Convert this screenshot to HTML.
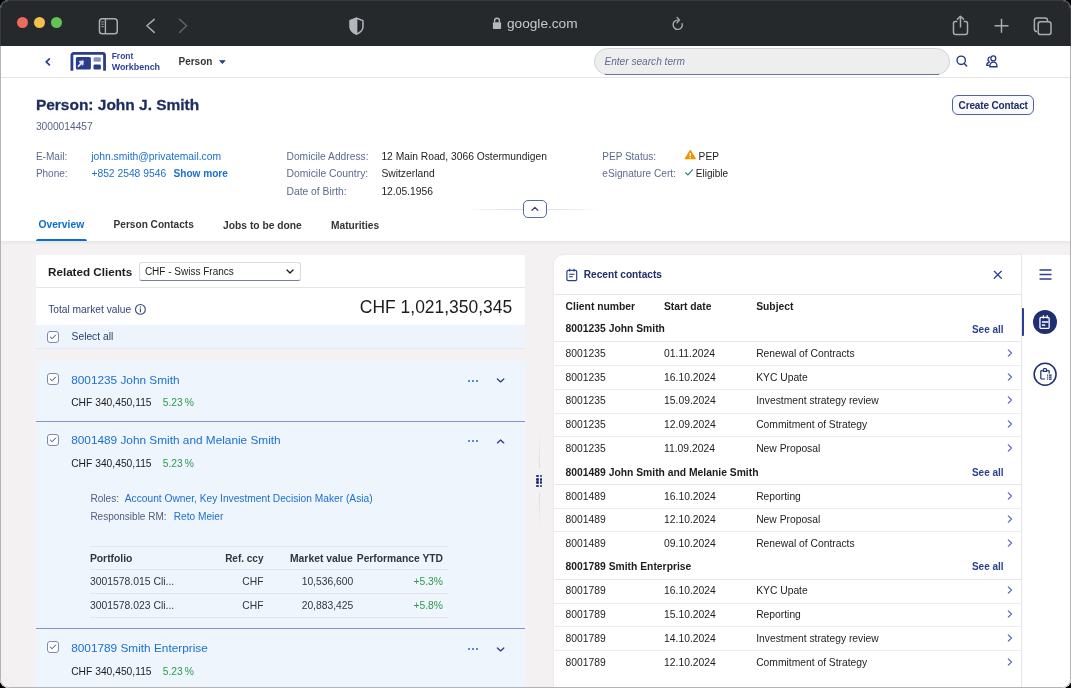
<!DOCTYPE html>
<html><head><meta charset="utf-8"><style>
html,body{margin:0;padding:0;width:1071px;height:688px;overflow:hidden;background:#000}
#win{position:absolute;left:0;top:0;width:1071px;height:688px;border-radius:8.5px;overflow:hidden;background:#fff;will-change:transform}
.t{position:absolute;white-space:nowrap;font-family:"Liberation Sans", sans-serif}
.r{position:absolute;display:block}
#frame{position:absolute;left:0;top:0;width:1071px;height:688px;box-sizing:border-box;border:1px solid #b3b3b3;border-radius:8.5px;pointer-events:none}
#frame2{position:absolute;left:0;top:0;width:1071px;height:46px;box-sizing:border-box;border:1px solid #373a3f;border-bottom:none;border-radius:8.5px 8.5px 0 0;pointer-events:none}
</style></head><body><div id="win">
<div class="r" style="left:0px;top:0px;width:1071px;height:46px;background:#25292c"></div>
<div class="r" style="left:17.2px;top:17.4px;width:11px;height:11px;background:#ec6a5e;border-radius:50%"></div>
<div class="r" style="left:33.9px;top:17.4px;width:11px;height:11px;background:#f4bf4f;border-radius:50%"></div>
<div class="r" style="left:50.6px;top:17.4px;width:11px;height:11px;background:#61c454;border-radius:50%"></div>
<svg class="r" style="left:97px;top:17px;" width="23" height="18" viewBox="0 0 23 18"><rect x="2.45" y="1.85" width="17.8" height="14.85" rx="2.8" fill="none" stroke="#a9acb1" stroke-width="1.5"/><line x1="8.4" y1="1.85" x2="8.4" y2="16.7" stroke="#a9acb1" stroke-width="1.4"/><line x1="4.3" y1="4.9" x2="6.8" y2="4.9" stroke="#a9acb1" stroke-width="0.9"/><line x1="4.3" y1="7.2" x2="6.8" y2="7.2" stroke="#a9acb1" stroke-width="0.9"/><line x1="4.3" y1="9.7" x2="6.8" y2="9.7" stroke="#a9acb1" stroke-width="0.9"/></svg>
<svg class="r" style="left:144px;top:17px;" width="13" height="18" viewBox="0 0 13 18"><polyline points="10.2,2.4 2.9,8.8 10.2,15.4" fill="none" stroke="#a9acb1" stroke-width="1.5" stroke-linecap="round" stroke-linejoin="round"/></svg>
<svg class="r" style="left:177px;top:17px;" width="13" height="18" viewBox="0 0 13 18"><polyline points="2.6,2.4 9.6,8.8 2.6,15.4" fill="none" stroke="#5d6166" stroke-width="1.5" stroke-linecap="round" stroke-linejoin="round"/></svg>
<svg class="r" style="left:348px;top:16px;" width="17" height="20" viewBox="0 0 17 20"><path d="M8.6 2.25 L14.95 4.6 V11 C14.95 14.2 12.2 16.6 8.6 18.1 C5 16.6 2.25 14.2 2.25 11 V4.6 Z" fill="none" stroke="#b3b7be" stroke-width="1.5" stroke-linejoin="round"/><path d="M8.6 2.25 L2.25 4.6 V11 C2.25 14.2 5 16.6 8.6 18.1 Z" fill="#b3b7be" stroke="#b3b7be" stroke-width="1.5" stroke-linejoin="round"/></svg>
<svg class="r" style="left:492px;top:16px;" width="10" height="14" viewBox="0 0 10 14"><path d="M2.6 6.5 V4.6 A2.4 2.4 0 0 1 7.4 4.6 V6.5" fill="none" stroke="#b3b7be" stroke-width="1.4"/><rect x="0.9" y="6.3" width="8.2" height="6.6" rx="1" fill="#b3b7be"/></svg>
<div class="t" style="left:507.00px;top:17px;font-size:13.65px;line-height:13.65px;font-weight:400;color:#c6c8cc;">google.com</div>
<svg class="r" style="left:670px;top:15px;" width="16" height="17" viewBox="0 0 16 17"><path d="M12.14 8.6 A4.6 4.6 0 1 1 7.9 5.2" fill="none" stroke="#a9acb1" stroke-width="1.35" stroke-linecap="round"/><polyline points="7,2.4 9.5,5.05 7,7.7" fill="none" stroke="#a9acb1" stroke-width="1.35" stroke-linecap="round" stroke-linejoin="round"/></svg>
<svg class="r" style="left:951px;top:14px;" width="19" height="22" viewBox="0 0 19 22"><path d="M6.3 7.6 H4.3 A1.8 1.8 0 0 0 2.5 9.4 V18.6 A1.8 1.8 0 0 0 4.3 20.4 H14.7 A1.8 1.8 0 0 0 16.5 18.6 V9.4 A1.8 1.8 0 0 0 14.7 7.6 H12.7" fill="none" stroke="#a9acb1" stroke-width="1.5"/><line x1="9.5" y1="2.5" x2="9.5" y2="13.5" stroke="#a9acb1" stroke-width="1.5"/><polyline points="6.4,5.3 9.5,2.2 12.6,5.3" fill="none" stroke="#a9acb1" stroke-width="1.5" stroke-linejoin="round" stroke-linecap="round"/></svg>
<svg class="r" style="left:993px;top:17px;" width="17" height="17" viewBox="0 0 17 17"><line x1="8.5" y1="1.8" x2="8.5" y2="15.8" stroke="#a9acb1" stroke-width="1.5"/><line x1="1.6" y1="8.8" x2="15.5" y2="8.8" stroke="#a9acb1" stroke-width="1.5"/></svg>
<svg class="r" style="left:1032px;top:15px;" width="22" height="22" viewBox="0 0 22 22"><path d="M5 16.5 H4.6 A2.2 2.2 0 0 1 2.4 14.3 V5.2 A2.2 2.2 0 0 1 4.6 3 H13.3 A2.2 2.2 0 0 1 15.5 5.2 V6" fill="none" stroke="#a9acb1" stroke-width="1.5"/><rect x="6.2" y="6.8" width="12.8" height="12.8" rx="2.4" fill="none" stroke="#a9acb1" stroke-width="1.5"/></svg>
<div class="r" style="left:0px;top:46px;width:1071px;height:31px;background:#fff"></div>
<div class="r" style="left:0px;top:76.5px;width:1071px;height:1px;background:#e4e4e6"></div>
<svg class="r" style="left:42px;top:56px;" width="9" height="12" viewBox="0 0 9 12"><polyline points="7.4,2.9 4.2,5.9 7.4,8.9" fill="none" stroke="#2b3f8f" stroke-width="1.7" stroke-linecap="round" stroke-linejoin="round"/></svg>
<svg class="r" style="left:70px;top:51px;" width="37" height="21" viewBox="0 0 37 21"><path d="M1.9 19.8 V4.35 A2 2 0 0 1 3.9 2.35 H32.55 A2 2 0 0 1 34.55 4.35 V19.8" fill="none" stroke="#2a3d8c" stroke-width="2.8"/><rect x="5.9" y="6" width="15" height="12.6" rx="1.5" fill="#2a3d8c"/><rect x="23.5" y="6.2" width="7.4" height="4.6" rx="1.4" fill="#8792c0"/><rect x="23.5" y="13.4" width="7.4" height="5.2" rx="1.4" fill="#2a3d8c"/><path d="M8.5 15.2 L12 11.7" stroke="#e4e4ea" stroke-width="1.9" stroke-linecap="round"/><path d="M9 10.5 L13.3 9.8 L12.9 14.2 Z" fill="#e4e4ea" stroke="#e4e4ea" stroke-width="0.9" stroke-linejoin="round"/></svg>
<div class="t" style="left:111.70px;top:52px;font-size:8.46px;line-height:8.46px;font-weight:700;color:#2c4494;">Front</div>
<div class="t" style="left:111.70px;top:63px;font-size:8.92px;line-height:8.92px;font-weight:700;color:#2c4494;">Workbench</div>
<div class="t" style="left:178.50px;top:57px;font-size:10.0px;line-height:10.0px;font-weight:700;color:#32363a;">Person</div>
<svg class="r" style="left:218px;top:59px;" width="9" height="6" viewBox="0 0 9 6"><path d="M1.6 1.6 H7.2 L4.4 4.7 Z" fill="#2b3f8f" stroke="#2b3f8f" stroke-width="0.7" stroke-linejoin="round"/></svg>
<div class="r" style="left:594px;top:48px;width:356px;height:27px;box-sizing:border-box;background:#eeeeef;border:1px solid #cfd2d8;border-radius:14px"></div>
<div class="r" style="left:605px;top:74px;width:334px;height:1px;background:#66759a"></div>
<div class="t" style="left:604.40px;top:57px;font-size:10.15px;line-height:10.15px;font-weight:400;color:#5f6d8e;font-style:italic">Enter search term</div>
<svg class="r" style="left:954px;top:55px;" width="15" height="14" viewBox="0 0 15 14"><circle cx="7.2" cy="5.3" r="4.2" fill="none" stroke="#24357f" stroke-width="1.35"/><line x1="10.3" y1="8.4" x2="12.7" y2="10.9" stroke="#24357f" stroke-width="1.4" stroke-linecap="round"/></svg>
<svg class="r" style="left:984px;top:54px;" width="16" height="15" viewBox="0 0 16 15"><circle cx="9.35" cy="4.4" r="2.45" fill="none" stroke="#24357f" stroke-width="1.25"/><path d="M5.75 12.75 C5.75 9.6 7.4 8.1 9.4 8.1 C11.4 8.1 13.05 9.6 13.05 12.75 Z" fill="none" stroke="#24357f" stroke-width="1.3" stroke-linejoin="round"/><path d="M6.4 3.2 A2.2 2.2 0 0 0 5.6 7.5" fill="none" stroke="#24357f" stroke-width="1.25"/><path d="M5.6 8.2 C3.6 8.7 2.65 9.8 2.65 11.3 H5.4" fill="none" stroke="#24357f" stroke-width="1.25" stroke-linejoin="round"/></svg>
<div class="r" style="left:0px;top:77.5px;width:1071px;height:163.5px;background:#fff"></div>
<div class="t" style="left:35.90px;top:97px;font-size:15.48px;line-height:15.48px;font-weight:700;color:#1d2d5e;-webkit-text-stroke:0.3px #1d2d5e">Person: John J. Smith</div>
<div class="t" style="left:35.90px;top:122px;font-size:10.23px;line-height:10.23px;font-weight:400;color:#556485;">3000014457</div>
<div class="r" style="left:952.2px;top:95.3px;width:81.4px;height:19.4px;box-sizing:border-box;border:1px solid #4d62a5;border-radius:6px;background:#fafafb"></div>
<div class="t" style="left:958.60px;top:101px;font-size:10.0px;line-height:10.0px;font-weight:700;color:#1d2d6b;letter-spacing:-0.14px">Create Contact</div>
<div class="t" style="left:35.90px;top:152px;font-size:10.09px;line-height:10.09px;font-weight:400;color:#5b6b8f;">E-Mail:</div>
<div class="t" style="left:91.20px;top:152px;font-size:10.34px;line-height:10.34px;font-weight:400;color:#1b6fd0;">john.smith@privatemail.com</div>
<div class="t" style="left:35.90px;top:169px;font-size:10.0px;line-height:10.0px;font-weight:400;color:#5b6b8f;">Phone:</div>
<div class="t" style="left:91.40px;top:169px;font-size:10.31px;line-height:10.31px;font-weight:400;color:#1b6fd0;">+852 2548 9546</div>
<div class="t" style="left:173.50px;top:169px;font-size:10.11px;line-height:10.11px;font-weight:700;color:#1b6fd0;">Show more</div>
<div class="t" style="left:286.50px;top:152px;font-size:10.25px;line-height:10.25px;font-weight:400;color:#5b6b8f;">Domicile Address:</div>
<div class="t" style="left:381.40px;top:152px;font-size:10.28px;line-height:10.28px;font-weight:400;color:#1d1d1f;">12 Main Road, 3066 Ostermundigen</div>
<div class="t" style="left:286.50px;top:169px;font-size:10.36px;line-height:10.36px;font-weight:400;color:#5b6b8f;">Domicile Country:</div>
<div class="t" style="left:381.40px;top:169px;font-size:10.31px;line-height:10.31px;font-weight:400;color:#1d1d1f;">Switzerland</div>
<div class="t" style="left:286.50px;top:187px;font-size:10.3px;line-height:10.3px;font-weight:400;color:#5b6b8f;">Date of Birth:</div>
<div class="t" style="left:381.40px;top:187px;font-size:10.29px;line-height:10.29px;font-weight:400;color:#1d1d1f;">12.05.1956</div>
<div class="t" style="left:602.30px;top:152px;font-size:10.0px;line-height:10.0px;font-weight:400;color:#5b6b8f;">PEP Status:</div>
<svg class="r" style="left:684px;top:149px;" width="13" height="11" viewBox="0 0 13 11"><path d="M6.3 1.5 L11.2 9.7 H1.4 Z" fill="#f39200" stroke="#f39200" stroke-width="1.3" stroke-linejoin="round"/><rect x="5.6" y="4" width="1.4" height="3.1" fill="#fff"/><rect x="5.6" y="7.9" width="1.4" height="1.3" fill="#fff"/></svg>
<div class="t" style="left:698.60px;top:152px;font-size:10.2px;line-height:10.2px;font-weight:400;color:#1d1d1f;">PEP</div>
<div class="t" style="left:602.30px;top:169px;font-size:10.12px;line-height:10.12px;font-weight:400;color:#5b6b8f;">eSignature Cert:</div>
<svg class="r" style="left:684px;top:168px;" width="10" height="8" viewBox="0 0 10 8"><polyline points="1.3,4.3 3.9,6.9 8.9,1.3" fill="none" stroke="#2b8a5a" stroke-width="1.2"/></svg>
<div class="t" style="left:695.80px;top:169px;font-size:10.0px;line-height:10.0px;font-weight:400;color:#1d1d1f;">Eligible</div>
<div class="r" style="left:465px;top:208.5px;width:135px;height:1px;background:linear-gradient(90deg,rgba(229,229,232,0),#e2e2e6 30%,#e2e2e6 70%,rgba(229,229,232,0))"></div>
<div class="r" style="left:523.1px;top:200.3px;width:23.7px;height:17.7px;box-sizing:border-box;border:1px solid #5568a8;border-radius:5px;background:#fff"></div>
<svg class="r" style="left:529px;top:204px;" width="12" height="9" viewBox="0 0 12 9"><polyline points="3,6.2 5.9,3.4 8.8,6.2" fill="none" stroke="#34426e" stroke-width="1.3" stroke-linecap="round" stroke-linejoin="round"/></svg>
<div class="t" style="left:38.40px;top:220px;font-size:10.3px;line-height:10.3px;font-weight:700;color:#0a6ed1;">Overview</div>
<div class="t" style="left:113.60px;top:220px;font-size:10.1px;line-height:10.1px;font-weight:700;color:#32363a;">Person Contacts</div>
<div class="t" style="left:223.10px;top:221px;font-size:10.28px;line-height:10.28px;font-weight:700;color:#32363a;">Jobs to be done</div>
<div class="t" style="left:331.00px;top:221px;font-size:10.2px;line-height:10.2px;font-weight:700;color:#32363a;">Maturities</div>
<div class="r" style="left:35.6px;top:238.6px;width:51.2px;height:2.6px;background:#0a6ed1;border-radius:2px 2px 0 0"></div>
<div class="r" style="left:0px;top:241px;width:1071px;height:447px;background:#f3f1f2"></div>
<div class="r" style="left:0;top:241px;width:1071px;height:4px;background:linear-gradient(#e6e5e7,rgba(243,241,242,0))"></div>
<div class="r" style="left:35.5px;top:255px;width:489.5px;height:93px;background:#fff"></div>
<div class="t" style="left:48.00px;top:266px;font-size:11.67px;line-height:11.67px;font-weight:700;color:#1d1d1f;">Related Clients</div>
<div class="r" style="left:139.3px;top:262.4px;width:162.2px;height:18.5px;box-sizing:border-box;border:1px solid #d9dbe0;border-bottom:1.5px solid #7480a8;border-radius:3px;background:#fff"></div>
<div class="t" style="left:144.90px;top:267px;font-size:10.0px;line-height:10.0px;font-weight:400;color:#1d1d1f;">CHF - Swiss Francs</div>
<svg class="r" style="left:284px;top:266px;" width="12" height="10" viewBox="0 0 12 10"><polyline points="3,4 6,6.9 9,4" fill="none" stroke="#1d1d1f" stroke-width="1.4" stroke-linecap="round" stroke-linejoin="round"/></svg>
<div class="r" style="left:35.5px;top:287px;width:489.5px;height:1px;background:#e5e5e7"></div>
<div class="t" style="left:48.20px;top:305px;font-size:10.23px;line-height:10.23px;font-weight:400;color:#34467a;">Total market value</div>
<svg class="r" style="left:134px;top:303px;" width="13" height="13" viewBox="0 0 13 13"><circle cx="6.4" cy="6.4" r="4.9" fill="none" stroke="#34467a" stroke-width="1.1"/><rect x="5.85" y="5.4" width="1.1" height="3.9" fill="#34467a"/><rect x="5.85" y="3.4" width="1.1" height="1.2" fill="#34467a"/></svg>
<div class="t" style="right:558.80px;top:299px;font-size:17.47px;line-height:17.47px;font-weight:400;color:#1d1d1f;">CHF 1,021,350,345</div>
<div class="r" style="left:35.5px;top:325px;width:489.5px;height:23px;background:#eef4fc"></div>
<div class="r" style="left:35.5px;top:347.5px;width:489.5px;height:1px;background:#e4e8ee"></div>
<div class="r" style="left:47.3px;top:331px;width:12px;height:12px;box-sizing:border-box;border:1px solid #7f89ab;border-radius:3px;background:#fff"></div>
<svg class="r" style="left:47.3px;top:331px;" width="12" height="12" viewBox="0 0 12 12"><polyline points="3.4,6.1 5.1,7.7 8.6,4.1" fill="none" stroke="#2b3f8f" stroke-width="1" stroke-linecap="round" stroke-linejoin="round"/></svg>
<div class="t" style="left:71.60px;top:332px;font-size:10.25px;line-height:10.25px;font-weight:400;color:#2c3b6b;">Select all</div>
<div class="r" style="left:35.5px;top:361px;width:489.5px;height:327px;background:#eef5fc"></div>
<div class="r" style="left:47.3px;top:373px;width:12px;height:12px;box-sizing:border-box;border:1px solid #7f89ab;border-radius:3px;background:#fff"></div>
<svg class="r" style="left:47.3px;top:373px;" width="12" height="12" viewBox="0 0 12 12"><polyline points="3.4,6.1 5.1,7.7 8.6,4.1" fill="none" stroke="#2b3f8f" stroke-width="1" stroke-linecap="round" stroke-linejoin="round"/></svg>
<div class="t" style="left:71.20px;top:375px;font-size:11.82px;line-height:11.82px;font-weight:400;color:#1b6fd0;">8001235 John Smith</div>
<div class="r" style="left:468.1px;top:379.55px;width:2.1px;height:2.1px;background:#1b6fd0;border-radius:50%"></div>
<div class="r" style="left:471.85px;top:379.55px;width:2.1px;height:2.1px;background:#1b6fd0;border-radius:50%"></div>
<div class="r" style="left:475.6px;top:379.55px;width:2.1px;height:2.1px;background:#1b6fd0;border-radius:50%"></div>
<svg class="r" style="left:495.4px;top:376.3px;" width="11" height="9" viewBox="0 0 11 9"><polyline points="2.4,3 5.6,5.9 8.8,3" fill="none" stroke="#2b3f8f" stroke-width="1.35" stroke-linecap="round" stroke-linejoin="round"/></svg>
<div class="t" style="left:71.20px;top:398px;font-size:10.29px;line-height:10.29px;font-weight:400;color:#1d1d1f;">CHF 340,450,115</div>
<div class="t" style="left:162.70px;top:398px;font-size:10.28px;line-height:10.28px;font-weight:400;color:#2f9a4a;">5.23&#8201;%</div>
<div class="r" style="left:35.5px;top:420.5px;width:489.5px;height:1.2px;background:#8794c4"></div>
<div class="r" style="left:47.3px;top:433.6px;width:12px;height:12px;box-sizing:border-box;border:1px solid #7f89ab;border-radius:3px;background:#fff"></div>
<svg class="r" style="left:47.3px;top:433.6px;" width="12" height="12" viewBox="0 0 12 12"><polyline points="3.4,6.1 5.1,7.7 8.6,4.1" fill="none" stroke="#2b3f8f" stroke-width="1" stroke-linecap="round" stroke-linejoin="round"/></svg>
<div class="t" style="left:71.20px;top:435px;font-size:11.82px;line-height:11.82px;font-weight:400;color:#1b6fd0;">8001489 John Smith and Melanie Smith</div>
<div class="r" style="left:468.1px;top:440.34999999999997px;width:2.1px;height:2.1px;background:#1b6fd0;border-radius:50%"></div>
<div class="r" style="left:471.85px;top:440.34999999999997px;width:2.1px;height:2.1px;background:#1b6fd0;border-radius:50%"></div>
<div class="r" style="left:475.6px;top:440.34999999999997px;width:2.1px;height:2.1px;background:#1b6fd0;border-radius:50%"></div>
<svg class="r" style="left:495.4px;top:437.1px;" width="11" height="9" viewBox="0 0 11 9"><polyline points="2.4,5.9 5.6,3 8.8,5.9" fill="none" stroke="#2b3f8f" stroke-width="1.35" stroke-linecap="round" stroke-linejoin="round"/></svg>
<div class="t" style="left:71.20px;top:459px;font-size:10.29px;line-height:10.29px;font-weight:400;color:#1d1d1f;">CHF 340,450,115</div>
<div class="t" style="left:162.70px;top:459px;font-size:10.28px;line-height:10.28px;font-weight:400;color:#2f9a4a;">5.23&#8201;%</div>
<div class="t" style="left:90.40px;top:494px;font-size:10.1px;line-height:10.1px;font-weight:400;color:#515d7e;">Roles:</div>
<div class="t" style="left:124.80px;top:494px;font-size:10.21px;line-height:10.21px;font-weight:400;color:#1b6fd0;">Account Owner, Key Investment Decision Maker (Asia)</div>
<div class="t" style="left:90.40px;top:512px;font-size:10.0px;line-height:10.0px;font-weight:400;color:#515d7e;">Responsible RM:</div>
<div class="t" style="left:173.80px;top:512px;font-size:10.14px;line-height:10.14px;font-weight:400;color:#1b6fd0;">Reto Meier</div>
<div class="r" style="left:89.9px;top:546px;width:359.1px;height:1px;background:#e3e7ed"></div>
<div class="r" style="left:89.9px;top:569px;width:359.1px;height:1px;background:#e3e7ed"></div>
<div class="r" style="left:89.9px;top:593px;width:359.1px;height:1px;background:#e3e7ed"></div>
<div class="r" style="left:89.9px;top:617px;width:359.1px;height:1px;background:#e3e7ed"></div>
<div class="t" style="left:89.90px;top:554px;font-size:10.35px;line-height:10.35px;font-weight:700;color:#32363a;">Portfolio</div>
<div class="t" style="right:807.50px;top:554px;font-size:10.0px;line-height:10.0px;font-weight:700;color:#32363a;">Ref. ccy</div>
<div class="t" style="left:290.00px;top:554px;font-size:10.35px;line-height:10.35px;font-weight:700;color:#32363a;">Market value</div>
<div class="t" style="right:628.00px;top:554px;font-size:10.3px;line-height:10.3px;font-weight:700;color:#32363a;">Performance YTD</div>
<div class="t" style="left:89.90px;top:577px;font-size:10.4px;line-height:10.4px;font-weight:400;color:#32363a;">3001578.015 Cli...</div>
<div class="t" style="right:807.50px;top:577px;font-size:10.3px;line-height:10.3px;font-weight:400;color:#32363a;">CHF</div>
<div class="t" style="right:717.80px;top:577px;font-size:10.3px;line-height:10.3px;font-weight:400;color:#32363a;">10,536,600</div>
<div class="t" style="right:628.00px;top:577px;font-size:10.3px;line-height:10.3px;font-weight:400;color:#2f9a4a;">+5.3%</div>
<div class="t" style="left:89.90px;top:601px;font-size:10.4px;line-height:10.4px;font-weight:400;color:#32363a;">3001578.023 Cli...</div>
<div class="t" style="right:807.50px;top:601px;font-size:10.3px;line-height:10.3px;font-weight:400;color:#32363a;">CHF</div>
<div class="t" style="right:717.80px;top:601px;font-size:10.3px;line-height:10.3px;font-weight:400;color:#32363a;">20,883,425</div>
<div class="t" style="right:628.00px;top:601px;font-size:10.3px;line-height:10.3px;font-weight:400;color:#2f9a4a;">+5.8%</div>
<div class="r" style="left:35.5px;top:628.3px;width:489.5px;height:1.2px;background:#8794c4"></div>
<div class="r" style="left:47.3px;top:641.2px;width:12px;height:12px;box-sizing:border-box;border:1px solid #7f89ab;border-radius:3px;background:#fff"></div>
<svg class="r" style="left:47.3px;top:641.2px;" width="12" height="12" viewBox="0 0 12 12"><polyline points="3.4,6.1 5.1,7.7 8.6,4.1" fill="none" stroke="#2b3f8f" stroke-width="1" stroke-linecap="round" stroke-linejoin="round"/></svg>
<div class="t" style="left:71.20px;top:643px;font-size:11.82px;line-height:11.82px;font-weight:400;color:#1b6fd0;">8001789 Smith Enterprise</div>
<div class="r" style="left:468.1px;top:648.1500000000001px;width:2.1px;height:2.1px;background:#1b6fd0;border-radius:50%"></div>
<div class="r" style="left:471.85px;top:648.1500000000001px;width:2.1px;height:2.1px;background:#1b6fd0;border-radius:50%"></div>
<div class="r" style="left:475.6px;top:648.1500000000001px;width:2.1px;height:2.1px;background:#1b6fd0;border-radius:50%"></div>
<svg class="r" style="left:495.4px;top:644.9px;" width="11" height="9" viewBox="0 0 11 9"><polyline points="2.4,3 5.6,5.9 8.8,3" fill="none" stroke="#2b3f8f" stroke-width="1.35" stroke-linecap="round" stroke-linejoin="round"/></svg>
<div class="t" style="left:71.20px;top:667px;font-size:10.29px;line-height:10.29px;font-weight:400;color:#1d1d1f;">CHF 340,450,115</div>
<div class="t" style="left:162.70px;top:667px;font-size:10.28px;line-height:10.28px;font-weight:400;color:#2f9a4a;">5.23&#8201;%</div>
<div class="r" style="left:539px;top:432px;width:1px;height:36px;background:linear-gradient(rgba(220,220,224,0),#dcdce0)"></div>
<div class="r" style="left:539px;top:493px;width:1px;height:36px;background:linear-gradient(#dcdce0,rgba(220,220,224,0))"></div>
<div class="r" style="left:536.4px;top:474.9px;width:2.5px;height:2.5px;background:#22327a;border-radius:50%"></div>
<div class="r" style="left:539.6999999999999px;top:474.9px;width:2.5px;height:2.5px;background:#22327a;border-radius:50%"></div>
<div class="r" style="left:536.4px;top:478.09999999999997px;width:2.5px;height:2.5px;background:#22327a;border-radius:50%"></div>
<div class="r" style="left:539.6999999999999px;top:478.09999999999997px;width:2.5px;height:2.5px;background:#22327a;border-radius:50%"></div>
<div class="r" style="left:536.4px;top:481.29999999999995px;width:2.5px;height:2.5px;background:#22327a;border-radius:50%"></div>
<div class="r" style="left:539.6999999999999px;top:481.29999999999995px;width:2.5px;height:2.5px;background:#22327a;border-radius:50%"></div>
<div class="r" style="left:536.4px;top:484.5px;width:2.5px;height:2.5px;background:#22327a;border-radius:50%"></div>
<div class="r" style="left:539.6999999999999px;top:484.5px;width:2.5px;height:2.5px;background:#22327a;border-radius:50%"></div>
<div class="r" style="left:553.7px;top:255px;width:468px;height:433px;background:#fff;border-radius:9px 0 0 0;box-shadow:0 0 2px rgba(0,0,0,0.10)"></div>
<svg class="r" style="left:565px;top:268px;" width="14" height="14" viewBox="0 0 14 14"><rect x="1.9" y="2.3" width="9.8" height="10.3" rx="1.3" fill="none" stroke="#2b3f8f" stroke-width="1.2"/><line x1="4.6" y1="0.8" x2="4.6" y2="3.6" stroke="#2b3f8f" stroke-width="1.2"/><line x1="9" y1="0.8" x2="9" y2="3.6" stroke="#2b3f8f" stroke-width="1.2"/><line x1="4.2" y1="6.3" x2="9.4" y2="6.3" stroke="#2b3f8f" stroke-width="1.1"/><line x1="4.2" y1="8.7" x2="7.8" y2="8.7" stroke="#2b3f8f" stroke-width="1.1"/></svg>
<div class="t" style="left:583.80px;top:270px;font-size:10.12px;line-height:10.12px;font-weight:700;color:#1d2d6b;">Recent contacts</div>
<svg class="r" style="left:991px;top:268px;" width="13" height="13" viewBox="0 0 13 13"><path d="M3.3 3.3 L10.3 10.3 M10.3 3.3 L3.3 10.3" stroke="#2b3f8f" stroke-width="1.25" stroke-linecap="round"/></svg>
<div class="r" style="left:553.7px;top:294px;width:468px;height:1px;background:#e5e5e7"></div>
<div class="t" style="left:565.60px;top:302px;font-size:10.35px;line-height:10.35px;font-weight:700;color:#1d1d1f;">Client number</div>
<div class="t" style="left:664.00px;top:302px;font-size:10.3px;line-height:10.3px;font-weight:700;color:#1d1d1f;">Start date</div>
<div class="t" style="left:756.20px;top:302px;font-size:10.3px;line-height:10.3px;font-weight:700;color:#1d1d1f;">Subject</div>
<div class="t" style="left:565.60px;top:324px;font-size:10.33px;line-height:10.33px;font-weight:700;color:#1d1d1f;">8001235 John Smith</div>
<div class="t" style="right:67.40px;top:325px;font-size:10.0px;line-height:10.0px;font-weight:700;color:#2b3f8f;">See all</div>
<div class="r" style="left:553.7px;top:341px;width:468px;height:1px;background:#e8e8ea"></div>
<div class="t" style="left:565.60px;top:349px;font-size:10.3px;line-height:10.3px;font-weight:400;color:#1d1d1f;">8001235</div>
<div class="t" style="left:664.00px;top:349px;font-size:10.35px;line-height:10.35px;font-weight:400;color:#1d1d1f;">01.11.2024</div>
<div class="t" style="left:756.20px;top:349px;font-size:10.3px;line-height:10.3px;font-weight:400;color:#1d1d1f;">Renewal of Contracts</div>
<svg class="r" style="left:1004.6px;top:347.6px;" width="10" height="10" viewBox="0 0 10 10"><polyline points="3.3,1.9 6.5,5 3.3,8.1" fill="none" stroke="#5567ad" stroke-width="1.2" stroke-linecap="round" stroke-linejoin="round"/></svg>
<div class="r" style="left:553.7px;top:365px;width:468px;height:1px;background:#ececee"></div>
<div class="t" style="left:565.60px;top:373px;font-size:10.3px;line-height:10.3px;font-weight:400;color:#1d1d1f;">8001235</div>
<div class="t" style="left:664.00px;top:373px;font-size:10.35px;line-height:10.35px;font-weight:400;color:#1d1d1f;">16.10.2024</div>
<div class="t" style="left:756.20px;top:373px;font-size:10.3px;line-height:10.3px;font-weight:400;color:#1d1d1f;">KYC Upate</div>
<svg class="r" style="left:1004.6px;top:371.6px;" width="10" height="10" viewBox="0 0 10 10"><polyline points="3.3,1.9 6.5,5 3.3,8.1" fill="none" stroke="#5567ad" stroke-width="1.2" stroke-linecap="round" stroke-linejoin="round"/></svg>
<div class="r" style="left:553.7px;top:389px;width:468px;height:1px;background:#ececee"></div>
<div class="t" style="left:565.60px;top:396px;font-size:10.3px;line-height:10.3px;font-weight:400;color:#1d1d1f;">8001235</div>
<div class="t" style="left:664.00px;top:396px;font-size:10.35px;line-height:10.35px;font-weight:400;color:#1d1d1f;">15.09.2024</div>
<div class="t" style="left:756.20px;top:396px;font-size:10.3px;line-height:10.3px;font-weight:400;color:#1d1d1f;">Investment strategy review</div>
<svg class="r" style="left:1004.6px;top:395.3px;" width="10" height="10" viewBox="0 0 10 10"><polyline points="3.3,1.9 6.5,5 3.3,8.1" fill="none" stroke="#5567ad" stroke-width="1.2" stroke-linecap="round" stroke-linejoin="round"/></svg>
<div class="r" style="left:553.7px;top:413px;width:468px;height:1px;background:#ececee"></div>
<div class="t" style="left:565.60px;top:420px;font-size:10.3px;line-height:10.3px;font-weight:400;color:#1d1d1f;">8001235</div>
<div class="t" style="left:664.00px;top:420px;font-size:10.35px;line-height:10.35px;font-weight:400;color:#1d1d1f;">12.09.2024</div>
<div class="t" style="left:756.20px;top:420px;font-size:10.3px;line-height:10.3px;font-weight:400;color:#1d1d1f;">Commitment of Strategy</div>
<svg class="r" style="left:1004.6px;top:419.1px;" width="10" height="10" viewBox="0 0 10 10"><polyline points="3.3,1.9 6.5,5 3.3,8.1" fill="none" stroke="#5567ad" stroke-width="1.2" stroke-linecap="round" stroke-linejoin="round"/></svg>
<div class="r" style="left:553.7px;top:436px;width:468px;height:1px;background:#ececee"></div>
<div class="t" style="left:565.60px;top:444px;font-size:10.3px;line-height:10.3px;font-weight:400;color:#1d1d1f;">8001235</div>
<div class="t" style="left:664.00px;top:444px;font-size:10.35px;line-height:10.35px;font-weight:400;color:#1d1d1f;">11.09.2024</div>
<div class="t" style="left:756.20px;top:444px;font-size:10.3px;line-height:10.3px;font-weight:400;color:#1d1d1f;">New Proposal</div>
<svg class="r" style="left:1004.6px;top:442.8px;" width="10" height="10" viewBox="0 0 10 10"><polyline points="3.3,1.9 6.5,5 3.3,8.1" fill="none" stroke="#5567ad" stroke-width="1.2" stroke-linecap="round" stroke-linejoin="round"/></svg>
<div class="t" style="left:565.60px;top:468px;font-size:10.33px;line-height:10.33px;font-weight:700;color:#1d1d1f;">8001489 John Smith and Melanie Smith</div>
<div class="t" style="right:67.40px;top:468px;font-size:10.0px;line-height:10.0px;font-weight:700;color:#2b3f8f;">See all</div>
<div class="r" style="left:553.7px;top:484px;width:468px;height:1px;background:#e8e8ea"></div>
<div class="t" style="left:565.60px;top:492px;font-size:10.3px;line-height:10.3px;font-weight:400;color:#1d1d1f;">8001489</div>
<div class="t" style="left:664.00px;top:492px;font-size:10.35px;line-height:10.35px;font-weight:400;color:#1d1d1f;">16.10.2024</div>
<div class="t" style="left:756.20px;top:492px;font-size:10.3px;line-height:10.3px;font-weight:400;color:#1d1d1f;">Reporting</div>
<svg class="r" style="left:1004.6px;top:490.5px;" width="10" height="10" viewBox="0 0 10 10"><polyline points="3.3,1.9 6.5,5 3.3,8.1" fill="none" stroke="#5567ad" stroke-width="1.2" stroke-linecap="round" stroke-linejoin="round"/></svg>
<div class="r" style="left:553.7px;top:507.65px;width:468px;height:1px;background:#ececee"></div>
<div class="t" style="left:565.60px;top:515px;font-size:10.3px;line-height:10.3px;font-weight:400;color:#1d1d1f;">8001489</div>
<div class="t" style="left:664.00px;top:515px;font-size:10.35px;line-height:10.35px;font-weight:400;color:#1d1d1f;">12.10.2024</div>
<div class="t" style="left:756.20px;top:515px;font-size:10.3px;line-height:10.3px;font-weight:400;color:#1d1d1f;">New Proposal</div>
<svg class="r" style="left:1004.6px;top:514.15px;" width="10" height="10" viewBox="0 0 10 10"><polyline points="3.3,1.9 6.5,5 3.3,8.1" fill="none" stroke="#5567ad" stroke-width="1.2" stroke-linecap="round" stroke-linejoin="round"/></svg>
<div class="r" style="left:553.7px;top:531.3px;width:468px;height:1px;background:#ececee"></div>
<div class="t" style="left:565.60px;top:539px;font-size:10.3px;line-height:10.3px;font-weight:400;color:#1d1d1f;">8001489</div>
<div class="t" style="left:664.00px;top:539px;font-size:10.35px;line-height:10.35px;font-weight:400;color:#1d1d1f;">09.10.2024</div>
<div class="t" style="left:756.20px;top:539px;font-size:10.3px;line-height:10.3px;font-weight:400;color:#1d1d1f;">Renewal of Contracts</div>
<svg class="r" style="left:1004.6px;top:537.8px;" width="10" height="10" viewBox="0 0 10 10"><polyline points="3.3,1.9 6.5,5 3.3,8.1" fill="none" stroke="#5567ad" stroke-width="1.2" stroke-linecap="round" stroke-linejoin="round"/></svg>
<div class="t" style="left:565.60px;top:562px;font-size:10.33px;line-height:10.33px;font-weight:700;color:#1d1d1f;">8001789 Smith Enterprise</div>
<div class="t" style="right:67.40px;top:562px;font-size:10.0px;line-height:10.0px;font-weight:700;color:#2b3f8f;">See all</div>
<div class="r" style="left:553.7px;top:579px;width:468px;height:1px;background:#e8e8ea"></div>
<div class="t" style="left:565.60px;top:586px;font-size:10.3px;line-height:10.3px;font-weight:400;color:#1d1d1f;">8001789</div>
<div class="t" style="left:664.00px;top:586px;font-size:10.35px;line-height:10.35px;font-weight:400;color:#1d1d1f;">16.10.2024</div>
<div class="t" style="left:756.20px;top:586px;font-size:10.3px;line-height:10.3px;font-weight:400;color:#1d1d1f;">KYC Upate</div>
<svg class="r" style="left:1004.6px;top:585.4px;" width="10" height="10" viewBox="0 0 10 10"><polyline points="3.3,1.9 6.5,5 3.3,8.1" fill="none" stroke="#5567ad" stroke-width="1.2" stroke-linecap="round" stroke-linejoin="round"/></svg>
<div class="r" style="left:553.7px;top:602.7px;width:468px;height:1px;background:#ececee"></div>
<div class="t" style="left:565.60px;top:610px;font-size:10.3px;line-height:10.3px;font-weight:400;color:#1d1d1f;">8001789</div>
<div class="t" style="left:664.00px;top:610px;font-size:10.35px;line-height:10.35px;font-weight:400;color:#1d1d1f;">15.10.2024</div>
<div class="t" style="left:756.20px;top:610px;font-size:10.3px;line-height:10.3px;font-weight:400;color:#1d1d1f;">Reporting</div>
<svg class="r" style="left:1004.6px;top:609.1px;" width="10" height="10" viewBox="0 0 10 10"><polyline points="3.3,1.9 6.5,5 3.3,8.1" fill="none" stroke="#5567ad" stroke-width="1.2" stroke-linecap="round" stroke-linejoin="round"/></svg>
<div class="r" style="left:553.7px;top:626.4px;width:468px;height:1px;background:#ececee"></div>
<div class="t" style="left:565.60px;top:634px;font-size:10.3px;line-height:10.3px;font-weight:400;color:#1d1d1f;">8001789</div>
<div class="t" style="left:664.00px;top:634px;font-size:10.35px;line-height:10.35px;font-weight:400;color:#1d1d1f;">14.10.2024</div>
<div class="t" style="left:756.20px;top:634px;font-size:10.3px;line-height:10.3px;font-weight:400;color:#1d1d1f;">Investment strategy review</div>
<svg class="r" style="left:1004.6px;top:632.8px;" width="10" height="10" viewBox="0 0 10 10"><polyline points="3.3,1.9 6.5,5 3.3,8.1" fill="none" stroke="#5567ad" stroke-width="1.2" stroke-linecap="round" stroke-linejoin="round"/></svg>
<div class="r" style="left:553.7px;top:650.1px;width:468px;height:1px;background:#ececee"></div>
<div class="t" style="left:565.60px;top:658px;font-size:10.3px;line-height:10.3px;font-weight:400;color:#1d1d1f;">8001789</div>
<div class="t" style="left:664.00px;top:658px;font-size:10.35px;line-height:10.35px;font-weight:400;color:#1d1d1f;">12.10.2024</div>
<div class="t" style="left:756.20px;top:658px;font-size:10.3px;line-height:10.3px;font-weight:400;color:#1d1d1f;">Commitment of Strategy</div>
<svg class="r" style="left:1004.6px;top:656.5px;" width="10" height="10" viewBox="0 0 10 10"><polyline points="3.3,1.9 6.5,5 3.3,8.1" fill="none" stroke="#5567ad" stroke-width="1.2" stroke-linecap="round" stroke-linejoin="round"/></svg>
<div class="r" style="left:1021.5px;top:255px;width:49.5px;height:433px;background:#fff"></div>
<div class="r" style="left:1021.3px;top:255px;width:1px;height:433px;background:#e5e5e7"></div>
<svg class="r" style="left:1038px;top:268px;" width="15" height="13" viewBox="0 0 15 13"><path d="M1.5 2 H13.5 M1.5 6.5 H13.5 M1.5 11 H13.5" stroke="#2b3f8f" stroke-width="1.5"/></svg>
<div class="r" style="left:1021.5px;top:307.8px;width:2.5px;height:28.3px;background:#2b3f8f;border-radius:0 1px 1px 0"></div>
<div class="r" style="left:1033.1px;top:309.9px;width:24.1px;height:24.1px;background:#1f2f72;border-radius:50%"></div>
<svg class="r" style="left:1038px;top:314px;" width="15" height="16" viewBox="0 0 15 16"><rect x="1.95" y="3.45" width="9.2" height="10.9" rx="1.2" fill="none" stroke="#fff" stroke-width="1.3"/><line x1="5.4" y1="1.3" x2="5.4" y2="4.6" stroke="#fff" stroke-width="1.3"/><line x1="9.2" y1="1.3" x2="9.2" y2="4.6" stroke="#fff" stroke-width="1.3"/><line x1="3.9" y1="8" x2="10.4" y2="8" stroke="#fff" stroke-width="1.5"/><line x1="3.9" y1="11.1" x2="7.3" y2="11.1" stroke="#fff" stroke-width="1.5"/></svg>
<svg class="r" style="left:1032px;top:361px;" width="26" height="26" viewBox="0 0 26 26"><circle cx="13.1" cy="13.2" r="10.95" fill="none" stroke="#1f2f72" stroke-width="1.55"/></svg>
<svg class="r" style="left:1038px;top:366px;" width="16" height="16" viewBox="0 0 16 16"><path d="M4.6 4.7 H3.6 A0.8 0.8 0 0 0 2.8 5.5 V12.2 A0.8 0.8 0 0 0 3.6 13 H7" fill="none" stroke="#1f2f72" stroke-width="1.2"/><path d="M5.3 5.3 V3.6 A0.9 0.9 0 0 1 6.2 2.7 H7.7 A0.9 0.9 0 0 1 8.6 3.6 V5.3 Z" fill="none" stroke="#1f2f72" stroke-width="1.2"/><path d="M9.2 4.7 H10.4 A0.8 0.8 0 0 1 11.2 5.5 V7.6" fill="none" stroke="#1f2f72" stroke-width="1.2"/><path d="M9.1 9.1 H10 M9.1 11.1 H10 M9.1 13.1 H10 M10.8 9.1 H13.7 M10.8 11.1 H13.7 M10.8 13.1 H13.7" stroke="#1f2f72" stroke-width="1.1"/></svg>
<div id="frame"></div><div id="frame2"></div>
</div></body></html>
